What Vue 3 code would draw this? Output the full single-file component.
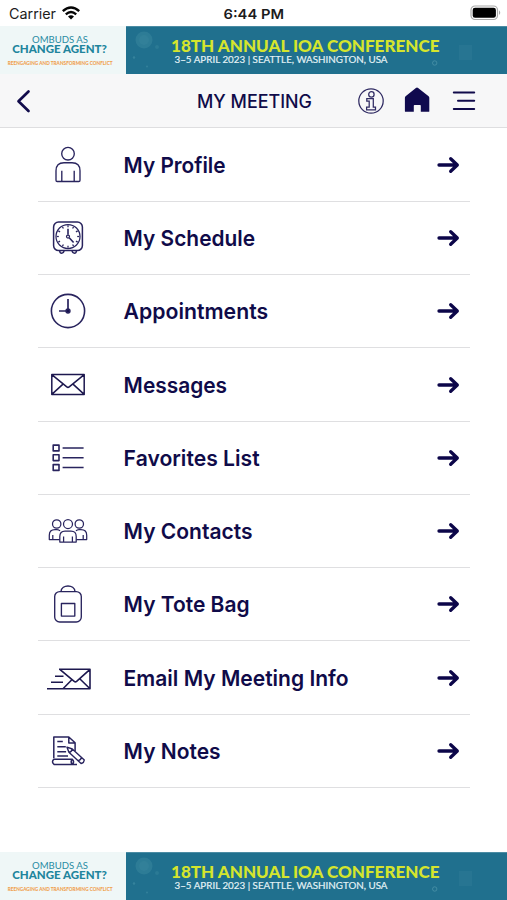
<script setup>
import { h } from 'vue'

const items = [
  { id: 'profile', label: 'My Profile', width: 102 },
  { id: 'schedule', label: 'My Schedule', width: 131.5 },
  { id: 'appointments', label: 'Appointments', width: 144.5 },
  { id: 'messages', label: 'Messages', width: 103.5 },
  { id: 'favorites', label: 'Favorites List', width: 136 },
  { id: 'contacts', label: 'My Contacts', width: 129 },
  { id: 'tote', label: 'My Tote Bag', width: 126 },
  { id: 'email', label: 'Email My Meeting Info', width: 225 },
  { id: 'notes', label: 'My Notes', width: 97 }
]

const ticks = Array.from({ length: 12 }, (_, i) => i * 30)

// Shared conference banner, shown above the navigation and at the page end
const Banner = () =>
  h('svg', { width: 507, height: 48.5, viewBox: '0 0 507 48.5', 'font-family': 'Lato, sans-serif' }, [
    h('rect', { width: 126, height: 48.5, fill: '#eff7f7' }),
    h('rect', { x: 126, width: 381, height: 48.5, fill: '#20708e' }),
    h('rect', { x: 126, width: 381, height: 0.8, fill: '#5794aa' }),
    h('g', { fill: '#4792a7' }, [
      h('circle', { cx: 144, cy: 14, r: 8.5, opacity: 0.35 }),
      h('circle', { cx: 144, cy: 14, r: 5, opacity: 0.2 }),
      h('circle', { cx: 157, cy: 21, r: 2, opacity: 0.3 }),
      h('circle', { cx: 134, cy: 31.5, r: 1.2, opacity: 0.55 }),
      h('circle', { cx: 147, cy: 40.5, r: 1, opacity: 0.5 }),
      h('rect', { x: 459, y: 19, width: 13, height: 15, opacity: 0.18 })
    ]),
    h('circle', { cx: 434.7, cy: 37, r: 2.2, fill: 'none', stroke: '#5ba0b2', 'stroke-width': 0.8, opacity: 0.7 }),
    h('text', { x: 32, y: 16.6, 'font-size': 9.5, fill: '#298ca3', textLength: 56, lengthAdjust: 'spacingAndGlyphs' }, 'OMBUDS AS'),
    h('text', { x: 12.3, y: 27.2, 'font-size': 11.3, 'font-weight': 900, fill: '#21859d', textLength: 94.5, lengthAdjust: 'spacingAndGlyphs' }, 'CHANGE AGENT?'),
    h('text', { x: 7.7, y: 39, 'font-size': 5.3, 'font-weight': 900, fill: '#efa04e', textLength: 105, lengthAdjust: 'spacingAndGlyphs' }, 'REENGAGING AND TRANSFORMING CONFLICT'),
    h('text', { x: 171, y: 26.4, 'font-size': 16.8, 'font-weight': 900, fill: '#d5e52d', textLength: 268.5, lengthAdjust: 'spacingAndGlyphs' }, '18TH ANNUAL IOA CONFERENCE'),
    h('text', { x: 174.5, y: 36.6, 'font-size': 8.6, fill: '#e5f3f6', stroke: '#e5f3f6', 'stroke-width': 0.15, textLength: 213, lengthAdjust: 'spacingAndGlyphs' }, '3–5 APRIL 2023 | SEATTLE, WASHINGTON, USA')
  ])
</script>

<template>
  <div class="screen">
    <header class="status">
      <div class="carrier">
        <svg width="56" height="20" viewBox="0 0 56 20"><text x="0" y="14" font-size="14" textLength="47" lengthAdjust="spacingAndGlyphs">Carrier</text></svg>
        <svg class="wifi" width="18" height="14" viewBox="0 0 18 14" fill="none" stroke="#050505" stroke-width="2.4">
          <path d="M.8 5.2Q9-2.2 17.2 5.2M3.8 8.3Q9 3.8 14.2 8.3" />
          <path d="M6 10.4Q9 8 12 10.4L9 13.6Z" fill="#050505" stroke="none" />
        </svg>
      </div>
      <svg class="time" width="62" height="20" viewBox="0 0 62 20"><text x="0.5" y="15" font-size="13.7" font-weight="600" textLength="60.5" lengthAdjust="spacingAndGlyphs">6:44 PM</text></svg>
      <svg class="battery" width="32" height="16" viewBox="0 0 32 16">
        <rect x="1" y="1" width="26.5" height="13.5" rx="4" fill="#fff" stroke="#aaa" stroke-width="1.2" />
        <rect x="2.7" y="2.7" width="23.2" height="10.1" rx="2.3" fill="#000" />
        <path d="M29 5.3q2.5 2.4 0 4.8z" fill="#aaa" />
      </svg>
    </header>

    <Banner class="banner" />

    <nav class="nav">
      <svg class="back" width="18" height="26" viewBox="0 0 18 26"><path d="M13.5 3.5L3.5 13.3L13.5 23" fill="none" stroke="#110b4b" stroke-width="2.7" stroke-linecap="round" stroke-linejoin="round" /></svg>
      <svg class="title" width="118" height="26" viewBox="0 0 118 26"><text x="1" y="20" font-size="18" font-weight="500" textLength="115" lengthAdjust="spacingAndGlyphs">MY MEETING</text></svg>
      <div class="tools">
        <svg width="28" height="28" viewBox="0 0 28 28" fill="none" stroke="#302b63" stroke-width="1.25">
          <circle cx="14" cy="14" r="12.2" />
          <circle cx="14.4" cy="7.4" r="2.7" />
          <path d="M9.8 11.5h6.5v8.7h2.2v2.6H9.6v-2.6h2.6v-6.2H9.8z" />
        </svg>
        <svg class="home" width="28" height="28" viewBox="0 0 28 28"><path d="M1.9 10.7Q1.9 9.9 2.6 9.3L12.9 1q1.1-.8 2.2 0L25.6 9.3q.7.6.7 1.5v13.4q0 .6-.6.6h-7.9v-6q0-.7-.7-.7h-5.6q-.7 0-.7.7v6H2.5q-.6 0-.6-.6z" fill="#100a4e" /></svg>
        <svg class="menu" width="26" height="24" viewBox="0 0 26 24"><path d="M2.8 3.5h20.4M7 11.8h16.2M2.8 20.1h20.4" stroke="#110b4b" stroke-width="2" stroke-linecap="round" /></svg>
      </div>
    </nav>

    <main class="list">
      <div v-for="item in items" :key="item.id" class="row">
        <svg class="icon" width="48" height="44" viewBox="-24 -22 48 44">
          <g v-if="item.id === 'profile'">
            <circle cx="0" cy="-11.3" r="6.3" />
            <path d="M-12 15.3V5.7q0-8 8-8H4q8 0 8 8v9.6q0 1.2-1.2 1.2h-21.6q-1.2 0-1.2-1.2zM-6.2 5.7v10.5M6.2 5.7v10.5" />
          </g>
          <g v-else-if="item.id === 'schedule'" class="fine">
            <rect x="-14.4" y="-16" width="28.8" height="28.6" rx="5" stroke-width="1.5" />
            <circle cx="0" cy="-1.5" r="12" />
            <path v-for="a in ticks" :key="a" d="M0-12.7v2" :transform="`rotate(${a} 0 -1.5)`" />
            <circle cx="0" cy="-1.5" r="1.5" />
            <path d="M0-3.2v-6M1.2-.3l4.4 4.8" stroke-width="1.6" />
            <path d="M-8.3 13q.2 2.2 2 2.2t2.4-2.2M4 13q.6 2.2 2.4 2.2t2-2.2" stroke-width="1.5" />
          </g>
          <g v-else-if="item.id === 'appointments'">
            <circle cx="0" cy="0" r="16.6" stroke-width="1.6" />
            <path d="M0-12V0H-9" stroke-width="1.7" />
            <circle cx="0" cy="0" r="2" fill="#17124f" />
          </g>
          <g v-else-if="item.id === 'messages'" class="bold">
            <path d="M-16.2-10.4h32.4V9.4h-32.4zM-16.2-10.4L-1.2 1.9q1.2 1 2.4 0L16.2-10.4M-16.2 9.4L-5-.9M16.2 9.4L5-.9" />
          </g>
          <g v-else-if="item.id === 'favorites'">
            <path d="M-14.8-12.9h5.8v5.8h-5.8zM-14.8-3.2h5.8v5.8h-5.8zM-14.8 6.6h5.8v5.8h-5.8zM-5.4-10h21M-5.4-.3h21M-5.4 9.5h21" stroke-width="1.6" />
          </g>
          <g v-else-if="item.id === 'contacts'" class="fine">
            <circle cx="-11.3" cy="-7" r="4.2" /><circle cx="11.3" cy="-7" r="4.2" /><circle cx="0" cy="-7" r="4.5" />
            <path d="M-8-.2q-1-1.3-3-1.3h-2q-5.7 0-5.7 5.7v4.3h10.4M8-.2q1-1.3 3-1.3h2q5.7 0 5.7 5.7v4.3H8.3M-15.2 4v4.3M15.2 4v4.3" />
            <path d="M-8.2 11V5.4Q-8.2 0-3 0h6Q8.2 0 8.2 5.4V11zM-4.4 5.6V11M4.4 5.6V11" />
          </g>
          <g v-else-if="item.id === 'tote'">
            <rect x="-13.3" y="-12.4" width="26.6" height="30.4" rx="5" />
            <path d="M-7-12.5C-6.5-19.9 6.5-19.9 7-12.5" />
            <rect x="-6.6" y="-.5" width="13.4" height="12.6" />
          </g>
          <g v-else-if="item.id === 'email'" class="bold">
            <path d="M-9-8.7h31v19.4h-43M-8.2-8.7L6.2 3.3q1.2 1 2.4 0L22-8.7M-5 10.7L4.1 1.5M22 10.7L12 1M-13-1.8h8.5M-17 4.3H-5" stroke-width="1.6" />
          </g>
          <g v-else class="fine">
            <path d="M-14.2 7.2v-21.2h15l6.3 5.8V0M.8-14v6.1h6.3M-10.7-9.5h5.5M-10.7-4.3h8.5M-10.7.8h8.8M-10.7 5H0" stroke-width="1.5" />
            <path d="M-13.9 8.2H4.3q-2.3 2.6 0 5.2h-18.2q-3.2-2.6 0-5.2zM4.3 8.2q2.5 2.6 0 5.2H9" stroke-width="1.5" />
            <path d="M-1-3.8L4.3-2 16.3 9q-.3 2.9-3.2 3.5L.9 1.2zM.9 1.2q2.6 0 3.4-3.2M10.2 9.8q2.7-.6 3.3-3.3" stroke-width="1.4" />
          </g>
        </svg>
        <svg class="label" width="260" height="32" viewBox="0 0 260 32"><text x="-0.4" y="23.8" font-size="22" font-weight="600" :textLength="item.width" lengthAdjust="spacingAndGlyphs">{{ item.label }}</text></svg>
        <svg class="arrow" width="26" height="24" viewBox="0 0 26 24"><path d="M3 12h18M14.7 5.7L21.3 12l-6.6 6.3" fill="none" stroke="#0c0649" stroke-width="3.3" stroke-linecap="round" stroke-linejoin="round" /></svg>
      </div>
    </main>

    <Banner class="banner bottom" />
  </div>
</template>

<style>
body { margin: 0; background: #fff; }
</style>

<style scoped>
.screen {
  width: 507px;
  height: 900px;
  display: flex;
  flex-direction: column;
  overflow: hidden;
  background: #fff;
  color: #100b49;
  font-family: Inter, sans-serif;
}
svg { display: block; flex: none; }
.screen text { fill: currentColor; }
.banner { flex: none; }
.status {
  height: 25.5px;
  flex: none;
  display: grid;
  grid-template-columns: 1fr 62px 1fr;
  align-items: start;
  color: #1c1c1c;
}
.carrier { display: flex; padding: 5px 0 0 9px; }
.carrier .wifi { margin: 1px 0 0 -3px; }
.time { margin-top: 4px; }
.battery { justify-self: end; margin: 5px 5px 0 0; }
.nav {
  height: 54px;
  flex: none;
  box-sizing: border-box;
  border-bottom: 1px solid #dedee0;
  background: #f7f7f8;
  display: grid;
  grid-template-columns: 196px 118px 1fr;
  align-items: center;
}
.back { margin-left: 15px; }
.title { margin-top: 1px; }
.tools { display: flex; align-items: center; padding-left: 43px; }
.home { margin-left: 18px; }
.menu { margin-left: 19.5px; }
.list { flex: none; padding: 0.7px 37px 0 38px; }
.row {
  height: 73.25px;
  box-sizing: border-box;
  border-bottom: 1px solid #dfdfe1;
  display: flex;
  align-items: center;
}
.icon {
  margin-left: 6px;
  overflow: visible;
  fill: none;
  stroke: #29245e;
  stroke-width: 1.35;
  stroke-linejoin: round;
}
.fine { stroke-width: 1.25; }
.bold { stroke: #1d184f; stroke-width: 1.5; }
.label { margin-left: 32px; overflow: visible; }
.arrow { margin-left: 52px; }
.bottom { margin-top: auto; }
</style>
